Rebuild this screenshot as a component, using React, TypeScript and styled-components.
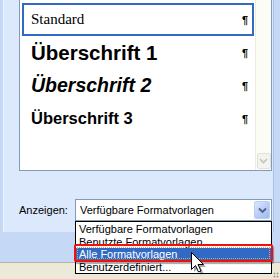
import styled, { createGlobalStyle } from 'styled-components';

const GlobalStyle = createGlobalStyle`
  html, body {
    margin: 0;
    padding: 0;
    background: #c5d8f6;
  }
  #root {
    width: 280px;
    height: 279px;
    overflow: hidden;
  }
`;

interface StyleItem {
  label: string;
  variant: 'serif' | 'h1' | 'h2' | 'h3';
  selected?: boolean;
}

const styleItems: StyleItem[] = [
  { label: 'Standard', variant: 'serif', selected: true },
  { label: 'Überschrift 1', variant: 'h1' },
  { label: 'Überschrift 2', variant: 'h2' },
  { label: 'Überschrift 3', variant: 'h3' },
];

const dropdownOptions = [
  'Verfügbare Formatvorlagen',
  'Benutzte Formatvorlagen',
  'Alle Formatvorlagen',
  'Benutzerdefiniert...',
];

function Cursor() {
  return (
    <CursorWrap>
      <svg width='16' height='24' viewBox='0 0 16 24'>
        <path
          d='M2.5 2.5 L2.5 19.5 L6.5 15.5 L9.5 22 L12 21 L9 14.5 L14.5 14.5 Z'
          fill='rgba(0,0,0,0.35)'
          transform='translate(1.5 1.5)'
        />
        <path
          d='M1.5 1.5 L1.5 18.5 L5.5 14.5 L8.5 21 L11 20 L8 13.5 L13.5 13.5 Z'
          fill='#fff'
          stroke='#000'
          strokeWidth='1'
          strokeLinejoin='miter'
        />
      </svg>
    </CursorWrap>
  );
}

export default function App() {
  return (
    <>
      <GlobalStyle />
      <Window>
        <Content>
          <Panel>
            <StyleList>
              <Rows>
                {styleItems.map((item) => (
                  <StyleRow key={item.label} $selected={item.selected}>
                    <StyleName $variant={item.variant}>{item.label}</StyleName>
                    <Pilcrow>¶</Pilcrow>
                  </StyleRow>
                ))}
              </Rows>
              <ScrollBar>
                <ScrollButton>
                  <svg width='9' height='6' viewBox='0 0 9 6'>
                    <path d='M1 1 L4.5 4.5 L8 1' fill='none' stroke='#c3c3bb' strokeWidth='1.6' />
                  </svg>
                </ScrollButton>
              </ScrollBar>
            </StyleList>
            <ShowRow>
              <Label>Anzeigen:</Label>
              <SelectBox>
                <SelectText>Verfügbare Formatvorlagen</SelectText>
                <SelectArrow>
                  <svg width='9' height='7' viewBox='0 0 9 7'>
                    <path d='M1 1.5 L4.5 5 L8 1.5' fill='none' stroke='#4d6185' strokeWidth='1.8' />
                  </svg>
                </SelectArrow>
                <Dropdown>
                  {dropdownOptions.map((opt, i) => (
                    <Option key={opt} $active={i === 2}>
                      {opt}
                    </Option>
                  ))}
                  <Highlight />
                </Dropdown>
                <Cursor />
              </SelectBox>
            </ShowRow>
          </Panel>
        </Content>
        <StatusBar>
          <Grip />
        </StatusBar>
      </Window>
    </>
  );
}

const Window = styled.div`
  width: 280px;
  height: 279px;
  display: flex;
  flex-direction: column;
  font-family: 'Liberation Sans', Arial, sans-serif;
`;

const Content = styled.div`
  flex: 1;
  padding: 0 6px 0 3px;
  background: #c5d8f6;
`;

const Panel = styled.div`
  height: 232px;
  box-sizing: border-box;
  background: #dce8fc;
  border-left: 1px solid #eef4fe;
  border-right: 1px solid #a8c2ec;
  padding-left: 15px;
  display: flex;
  flex-direction: column;
`;

const StyleList = styled.div`
  width: 253px;
  height: 172px;
  margin-top: -1px;
  box-sizing: border-box;
  border: 1px solid #7f9db9;
  background: #fff;
  display: flex;
`;

const Rows = styled.div`
  flex: 1;
  padding: 3px 0 0 2px;
  display: flex;
  flex-direction: column;
`;

const StyleRow = styled.div<{ $selected?: boolean }>`
  height: 33px;
  box-sizing: border-box;
  display: flex;
  align-items: center;
  justify-content: space-between;
  padding: 0 4px 0 7px;
  border: 2px solid ${({ $selected }) => ($selected ? '#316ac5' : 'transparent')};
  margin-right: 1px;
`;

const fontFor = {
  serif: `font-family: 'Liberation Serif', 'Times New Roman', serif; font-size: 15px; font-weight: normal;`,
  h1: `font-size: 20.5px; font-weight: bold;`,
  h2: `font-size: 19.5px; font-weight: bold; font-style: italic;`,
  h3: `font-size: 16.5px; font-weight: bold;`,
};

const StyleName = styled.span<{ $variant: StyleItem['variant'] }>`
  color: #000;
  white-space: nowrap;
  ${({ $variant }) => fontFor[$variant]}
`;

const Pilcrow = styled.span`
  font-size: 11px;
  font-weight: bold;
  color: #000;
`;

const ScrollBar = styled.div`
  width: 16px;
  box-sizing: border-box;
  border-left: 1px solid #ecebe4;
  background: #fcfcf7;
  display: flex;
  flex-direction: column;
  justify-content: flex-end;
  align-items: center;
  padding-bottom: 1px;
`;

const ScrollButton = styled.div`
  width: 14px;
  height: 16px;
  box-sizing: border-box;
  border: 1px solid #e3e2da;
  border-radius: 2px;
  background: #f4f3ee;
  display: flex;
  align-items: center;
  justify-content: center;
`;

const ShowRow = styled.div`
  margin-top: 28px;
  display: flex;
  align-items: center;
`;

const Label = styled.span`
  width: 56px;
  font-size: 11px;
  color: #000;
`;

const SelectBox = styled.div`
  position: relative;
  width: 197px;
  height: 22px;
  box-sizing: border-box;
  border: 1px solid #7f9db9;
  background: #fff;
  display: flex;
  align-items: center;
  justify-content: space-between;
  padding: 0 1px 0 4px;
`;

const SelectText = styled.span`
  font-size: 11px;
  color: #000;
`;

const SelectArrow = styled.div`
  width: 16px;
  height: 18px;
  box-sizing: border-box;
  border: 1px solid #b9cdf6;
  border-radius: 2px;
  background: linear-gradient(135deg, #dbe6fe 0%, #b5c9f7 60%, #a4baf0 100%);
  display: flex;
  align-items: center;
  justify-content: center;
`;

const Dropdown = styled.div`
  position: absolute;
  left: -1px;
  top: 21px;
  width: 197px;
  box-sizing: border-box;
  border: 1px solid #000;
  background: #fff;
  padding: 1px 0 0;
  z-index: 2;
`;

const Option = styled.div<{ $active?: boolean }>`
  height: 12.5px;
  line-height: 12px;
  padding-left: 3px;
  font-size: 11px;
  white-space: nowrap;
  color: ${({ $active }) => ($active ? '#fff' : '#000')};
  background: ${({ $active }) => ($active ? '#316ac5' : 'transparent')};
`;

const Highlight = styled.div`
  position: absolute;
  left: -2px;
  right: -2px;
  top: 22px;
  height: 18px;
  box-sizing: border-box;
  border: 2px solid #ee1111;
  border-radius: 2px;
  box-shadow: 1px 2px 1px rgba(0, 0, 0, 0.35);
  &::after {
    content: '';
    position: absolute;
    left: 1px;
    right: 1px;
    top: 1px;
    bottom: 1px;
    border: 1px dotted #e8a040;
  }
`;

const CursorWrap = styled.div`
  position: absolute;
  left: 114px;
  top: 51px;
  z-index: 3;
  line-height: 0;
`;

const StatusBar = styled.div`
  height: 17px;
  box-sizing: border-box;
  border-top: 1px solid #b5b2a4;
  background: #ece9d8;
  position: relative;
`;

const Grip = styled.div`
  position: absolute;
  right: 1px;
  bottom: 1px;
  width: 6px;
  height: 6px;
  background-image: radial-gradient(#a8a596 45%, transparent 50%);
  background-size: 3px 3px;
`;
